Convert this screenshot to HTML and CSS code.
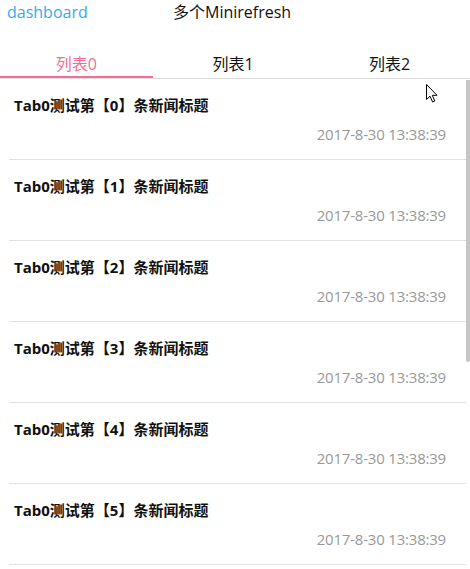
FILE: index.html
```html
<!DOCTYPE html>
<html lang="zh">
<head>
<meta charset="utf-8">
<link rel="stylesheet" href="styles.css">
</head>
<body>
<div class="page">
  <header class="header">
    <span class="back">dashboard</span>
    <span class="title">多个Minirefresh</span>
  </header>
  <nav class="tabs">
    <div class="tab active">列表0</div>
    <div class="tab">列表1</div>
    <div class="tab">列表2</div>
  </nav>
  <div class="list-wrap">
    <div class="list">
      <div class="item"><div class="item-title">Tab0测试第【0】条新闻标题</div><div class="item-time">2017-8-30 13:38:39</div></div>
      <div class="item"><div class="item-title">Tab0测试第【1】条新闻标题</div><div class="item-time">2017-8-30 13:38:39</div></div>
      <div class="item"><div class="item-title">Tab0测试第【2】条新闻标题</div><div class="item-time">2017-8-30 13:38:39</div></div>
      <div class="item"><div class="item-title">Tab0测试第【3】条新闻标题</div><div class="item-time">2017-8-30 13:38:39</div></div>
      <div class="item"><div class="item-title">Tab0测试第【4】条新闻标题</div><div class="item-time">2017-8-30 13:38:39</div></div>
      <div class="item"><div class="item-title">Tab0测试第【5】条新闻标题</div><div class="item-time">2017-8-30 13:38:39</div></div>
    </div>
    <div class="scrollbar"><div class="thumb"></div></div>
  </div>
  <svg class="cursor" width="12" height="19" viewBox="0 0 12 19">
    <path d="M0.5 0.5 L0.5 15.5 L4 12.2 L6.6 18 L8.8 17 L6.3 11.3 L11 11.3 Z" fill="#fff" stroke="#000" stroke-width="1" stroke-linejoin="miter"/>
  </svg>
</div>
</body>
</html>
```
FILE: styles.css
```css
html, body {
  margin: 0;
  padding: 0;
  background: #fff;
}
body {
  font-family: "Open Sans", "Noto Sans CJK SC", sans-serif;
  color: #000;
}
.page {
  position: relative;
  width: 470px;
  height: 569px;
  overflow: hidden;
  display: flex;
  flex-direction: column;
}
.header {
  height: 24px;
  line-height: 24px;
  font-size: 16px;
  display: flex;
  padding-left: 7px;
}
.back {
  color: #33aaee;
  width: 166px;
}
.title {
  color: #111;
}
.tabs {
  margin-top: 22px;
  display: flex;
  height: 32px;
  border-bottom: 1px solid #dddddd;
}
.tab {
  flex: 1;
  position: relative;
  text-align: center;
  font-size: 16px;
  line-height: 36px;
  padding-right: 4px;
  color: #111;
}
.tab.active {
  color: #f27096;
}
.tab.active::after {
  content: "";
  position: absolute;
  left: 0;
  right: 4px;
  bottom: 0;
  height: 2px;
  background: #f27096;
}
.list-wrap {
  flex: 1;
  min-height: 0;
  display: flex;
}
.list {
  flex: 1;
  overflow: hidden;
  padding-left: 9px;
}
.scrollbar {
  width: 4px;
  padding-top: 1px;
}
.thumb {
  height: 282px;
  background: #c6c6c6;
  border-radius: 0 0 2px 2px;
}
.item {
  box-sizing: content-box;
  height: 64px;
  border-bottom: 1px solid #e2e2e2;
  padding: 16px 20px 0 5px;
}
.item-title {
  line-height: 20px;
  font-size: 15px;
  font-weight: bold;
  color: #111;
}
.item-time {
  margin-top: 9px;
  line-height: 20px;
  font-size: 15px;
  letter-spacing: -0.2px;
  text-align: right;
  color: #999;
}
.cursor {
  position: absolute;
  left: 426px;
  top: 84px;
}
```
